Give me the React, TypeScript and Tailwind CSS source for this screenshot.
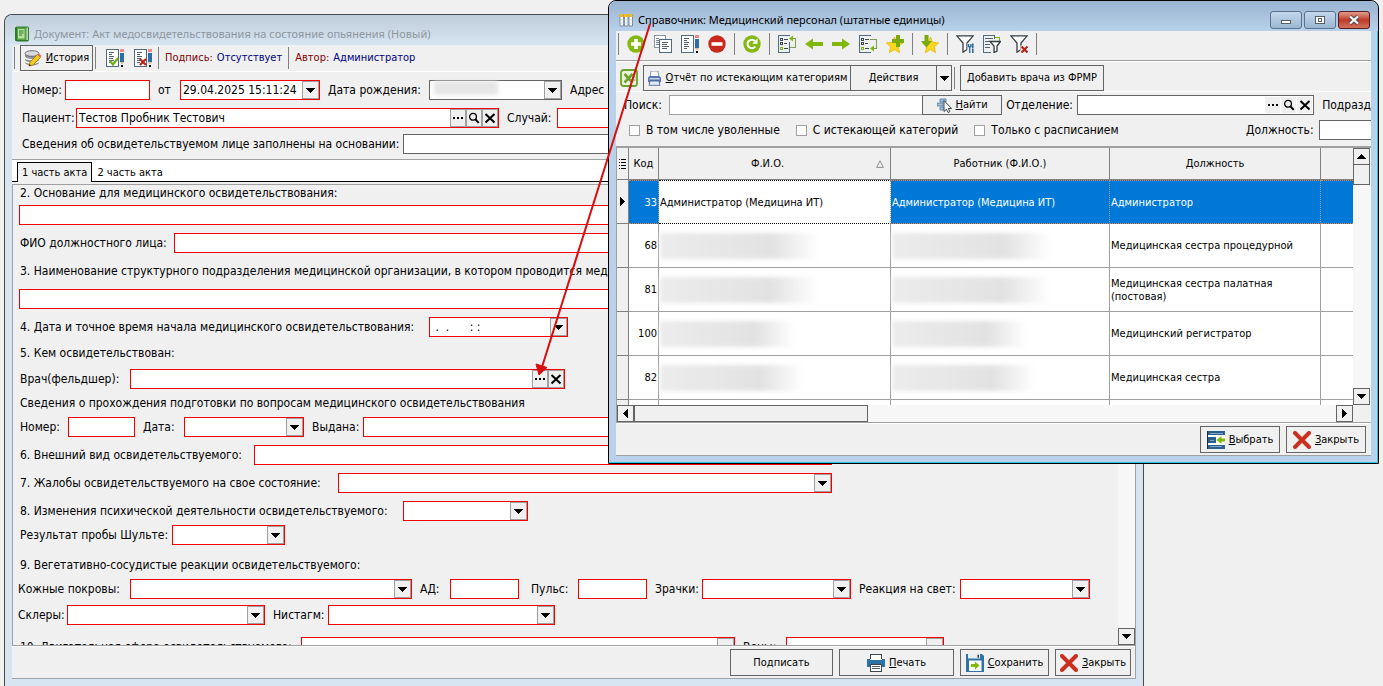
import React, { useId, useState } from 'react';
import clsx from 'clsx';

type Tone = 'red' | 'gray' | 'light';

const toneClass: Record<Tone, string> = {
  red: 'border-[#f50000]',
  gray: 'border-[#646464]',
  light: 'border-[#a0a0a0]',
};

interface FieldProps {
  label?: string;
  name?: string;
  labelClass?: string;
  className?: string;
  tone?: Tone;
  value?: string;
}

/* ---------- small glyphs ---------- */

function Triangle({ dir = 'down' }: { dir?: 'down' | 'up' | 'left' | 'right' }) {
  const d = {
    down: 'M0 2h9L4.5 7z',
    up: 'M0 7h9L4.5 2z',
    left: 'M7 0v9L2 4.5z',
    right: 'M2 0v9l5-4.5z',
  }[dir];
  return (
    <svg viewBox="0 0 9 9" className="size-[9px]" shapeRendering="crispEdges">
      <path d={d} fill="#000" />
    </svg>
  );
}

function DotsGlyph() {
  return (
    <svg viewBox="0 0 12 12" className="size-3" shapeRendering="crispEdges">
      <path d="M1 5h2v2H1zM5 5h2v2H5zM9 5h2v2H9z" fill="#000" />
    </svg>
  );
}

function LensGlyph() {
  return (
    <svg viewBox="0 0 12 12" className="size-3" fill="none" stroke="#000">
      <circle cx="5" cy="4.8" r="3.4" strokeWidth="1.3" />
      <path d="M7.3 7.3l3.4 3.6" strokeWidth="2" />
    </svg>
  );
}

function CrossGlyph() {
  return (
    <svg viewBox="0 0 12 12" className="size-3" stroke="#000" strokeWidth="2">
      <path d="M1.5 2l9 8.500M10.500 2l-9 8.500" />
    </svg>
  );
}

/* ---------- toolbar icons ---------- */

function Icon({ children }: { children: React.ReactNode }) {
  return (
    <svg viewBox="0 0 18 18" className="size-[18px] shrink-0" fill="none">
      {children}
    </svg>
  );
}

const BookIcon = () => (
  <svg viewBox="0 0 16 16" className="size-4 shrink-0">
    <path d="M1 1.500L3 .5h11l1 1V14l-1 1.500H3L1 14.500z" fill="#2f7a2c" />
    <path d="M3 1.500h9V14H3z" fill="#58a545" />
    <path d="M4 3h6.500v9.500H4z" fill="#b5e09c" />
    <path d="M5 5h4.500M5 7h4.500M5 9h3" stroke="#2f7a2c" />
    <path d="M12.500 1.500h1.300V14h-1.300z" fill="#e6efe2" />
  </svg>
);

const GridIcon = () => (
  <svg viewBox="0 0 14 14" className="size-3.5 shrink-0">
    <path d="M1 2h3.500v11H1zM5.500 2H9v11H5.500zM10 2h3.500v11H10z" fill="#fff" stroke="#6d8196" strokeWidth=".9" />
    <path d="M.5 1h4v3h-4zM5 1h4v3H5zM9.500 1h4v3h-4z" fill="#f0bb2b" />
    <path d="M1 7h12.500M1 10h12.500" stroke="#b7c5d3" strokeWidth=".7" />
  </svg>
);

const HistoryIcon = () => (
  <Icon>
    <path d="M1 4.500v9c0 1.600 3.200 3 7 3s7-1.400 7-3v-9z" fill="#8f9296" />
    <path d="M1 8c0 1.400 3.200 2.600 7 2.600S15 9.400 15 8M1 11.500c0 1.400 3.200 2.600 7 2.600s7-1.200 7-2.600" stroke="#fff" strokeWidth="1.200" />
    <ellipse cx="8" cy="4.500" rx="7" ry="2.800" fill="#d9dbdd" stroke="#6f7276" />
    <path d="M5 17l1-4 7.500-7.500 3 3L9 16z" fill="#f4c921" stroke="#a67408" strokeWidth=".8" />
    <path d="M13.500 5.500l3 3 1-1.500-2.500-2.500z" fill="#e86a5c" />
    <path d="M5 17l.6-2 1.400 1.400z" fill="#111" />
  </Icon>
);

const Sheet = ({ w = 11 }: { w?: number }) => (
  <g shapeRendering="crispEdges">
    <path d={`M.5 .5h${w}v17H.5z`} fill="#fff" stroke="#4f6b84" />
    <path d="M3 3.500h5M3 5.500h3M3 7.500h5M3 9.500h4M3 11.500h5M3 13.500h3" stroke="#54606b" />
  </g>
);

const Pen = () => (
  <g shapeRendering="crispEdges">
    <path d="M14 0h4v3h-4z" fill="#ee8a86" />
    <path d="M14 4h4v9h-4z" fill="#2d6fa5" />
    <path d="M14 13h4l-1 2h-2z" fill="#dfc29a" />
    <path d="M15 16h2v2h-2z" fill="#000" />
  </g>
);

const SignIcon = () => (
  <Icon>
    <Sheet w={12} />
    <path d="M4 12l3 3.500L12 9" stroke="#6fae16" strokeWidth="2.200" />
    <Pen />
  </Icon>
);

const UnsignIcon = () => (
  <Icon>
    <Sheet w={12} />
    <path d="M6 10l6 6M12 10l-6 6" stroke="#b8231a" strokeWidth="2.200" />
    <Pen />
  </Icon>
);

const EditIcon = () => (
  <Icon>
    <Sheet w={12} />
    <Pen />
  </Icon>
);

const AddIcon = () => (
  <Icon>
    <circle cx="9" cy="9" r="8.700" fill="#84b813" />
    <path d="M9 4v10M4 9h10" stroke="#fff" strokeWidth="3.600" />
  </Icon>
);

const RemoveIcon = () => (
  <Icon>
    <circle cx="9" cy="9" r="8.700" fill="#c9281c" />
    <path d="M3.500 9h11" stroke="#fff" strokeWidth="3.600" />
  </Icon>
);

const RefreshIcon = () => (
  <Icon>
    <circle cx="9" cy="9" r="8.700" fill="#84b813" />
    <path d="M12.300 11.500A4.300 4.300 0 1 1 12 6" stroke="#fff" strokeWidth="2" />
    <path d="M14.500 3.500v5.200H9.300z" fill="#fff" />
  </Icon>
);

const CopyIcon = () => (
  <Icon>
    <g shapeRendering="crispEdges">
      <path d="M.5 .5h11v12H.5z" fill="#fff" stroke="#8796a5" />
      <path d="M2 3.500h3M2 5.500h3M2 7.500h3M2 9.500h3" stroke="#6f7d8a" />
      <path d="M5.500 4.500h12v13h-12z" fill="#fff" stroke="#4f6b84" />
      <path d="M8 7.500h6M8 9.500h5M8 11.500h7M8 13.500h5" stroke="#54606b" />
    </g>
  </Icon>
);

const ListIcon = ({ down }: { down?: boolean }) => (
  <Icon>
    <g shapeRendering="crispEdges">
      <path d="M11.500 1V.5H.5v17h11V17" stroke="#4f6b84" />
      <path d="M2.500 3.500h2v2h-2zM2.500 7.500h2v2h-2z" stroke="#3c4854" />
      <path d="M2.500 12.500h2v2h-2z" stroke="#7fae1c" />
      <path d="M6 4.500h4M6 8.500h3M6 13.500h4" stroke="#3c4854" />
      <path d={down ? 'M11 4.500h6.500v9H14' : 'M14 3.500h3.500v9H11'} stroke="#7d9a5a" />
    </g>
    <path d={down ? 'M11 13.500l4-3v6z' : 'M11 3.500l4-3v6z'} fill="#7fb40f" />
    {!down && <path d="M11.500 7v10" stroke="#4f6b84" />}
  </Icon>
);

const ArrowIcon = ({ right }: { right?: boolean }) => (
  <Icon>
    <path
      d={right ? 'M0 7h10V3.500L18 9l-8 5.500V11H0z' : 'M18 7H8V3.500L0 9l8 5.500V11h10z'}
      fill="#80b80c"
    />
  </Icon>
);

const STAR = 'M9 1l2.300 5.400 6 .5-4.500 3.900 1.400 6L9 13.600 3.800 16.800l1.400-6L.7 6.900l6-.5z';

const StarAddIcon = () => (
  <Icon>
    <path d={STAR} transform="translate(-.5 1)" fill="#fbd81e" stroke="#e8b60c" strokeWidth=".8" />
    <path d="M12 0v12M6 6h12" stroke="#78ab12" strokeWidth="4" />
  </Icon>
);

const StarDownIcon = () => (
  <Icon>
    <path d={STAR} transform="translate(.5 1)" fill="#fbd81e" stroke="#e8b60c" strokeWidth=".8" />
    <path d="M3.500 0h4v6H11l-5.500 6.500L0 6h3.500z" fill="#78ab12" />
  </Icon>
);

const FUNNEL = 'M.8 .8h16.400L11 8v6.500l-4 2.700V8z';

const FunnelToolIcon = () => (
  <Icon>
    <path d={FUNNEL} fill="#fff" stroke="#333c45" strokeWidth="1.300" />
    <path d="M11.500 8h6.500v10h-6.500z" fill="#f0f0f0" />
    <path d="M12.500 9v2.500h2.500V9M13.700 11v7" stroke="#2d6fa5" strokeWidth="1.400" />
    <path d="M16.800 8.500v5M16.800 14v4" stroke="#2d6fa5" strokeWidth="1.600" />
  </Icon>
);

const FunnelListIcon = () => (
  <Icon>
    <g shapeRendering="crispEdges">
      <path d="M8 17.500H.5V.5h11V4" stroke="#4f6b84" />
      <path d="M2 3.500h8M2 6.500h5M2 9.500h5M2 12.500h5" stroke="#54606b" />
      <path d="M12 2.500h4.500V6" stroke="#7fb40f" />
    </g>
    <path d="M7 6.500h10.500L14 11v5l-3 1.500V11z" fill="#fff" stroke="#333c45" strokeWidth="1.300" />
  </Icon>
);

const FunnelClearIcon = () => (
  <Icon>
    <path d={FUNNEL} fill="#fff" stroke="#333c45" strokeWidth="1.300" />
    <path d="M10.500 10.500h8v8h-8z" fill="#f0f0f0" />
    <path d="M11.500 11.500l6 6M17.500 11.500l-6 6" stroke="#b8231a" strokeWidth="2.200" />
  </Icon>
);

const ExcelIcon = () => (
  <Icon>
    <rect x="1" y="1" width="16" height="16" rx="2.500" fill="#e9f3dc" stroke="#6ca32a" strokeWidth="1.800" />
    <path d="M4.500 5l8 8.500M12.500 5l-8 8.500" stroke="#6ca32a" strokeWidth="2.600" />
    <path d="M13 5h2.500M13 8h2.500M13 11h2.500" stroke="#6ca32a" />
  </Icon>
);

const PhotoPrinterIcon = () => (
  <svg viewBox="0 0 15 15" className="size-[15px] shrink-0">
    <path d="M4 0h7l1 6H3z" fill="#fff" stroke="#6b7fa0" strokeWidth=".8" />
    <path d="M1 6.500L3 5h9l2 1.500V11l-2 1H3l-2-1z" fill="#5877ae" />
    <path d="M2.500 7h10v1.500h-10z" fill="#c6d4ec" />
    <path d="M3 10h9l1 4.300H2z" fill="#e3ebf8" stroke="#3d588c" strokeWidth=".8" />
  </svg>
);

const PrinterIcon = () => (
  <Icon>
    <g shapeRendering="crispEdges">
      <path d="M3.500 .5h11v6h-11z" fill="#fff" stroke="#3b4650" />
      <path d="M0 5h18v8H0z" fill="#2e72a8" />
      <path d="M3 5h12v1H3z" fill="#fff" />
      <path d="M3.500 10.500h11v7h-11z" fill="#fff" stroke="#3b4650" />
      <path d="M5 12.500h8M5 14.500h8" stroke="#54606b" />
    </g>
  </Icon>
);

const FindIcon = () => (
  <svg viewBox="0 0 15 15" className="size-[15px] shrink-0">
    <path d="M3 1h6v3H3zM0 5h6v3H0zM3 9h6v3H3z" fill="#9fbfd9" stroke="#4f7ea6" strokeWidth=".8" />
    <path d="M7 2.500v11l2.500-2.300L11 14.500l1.800-.8-1.500-3.200H14.500z" fill="#fff" stroke="#333" strokeWidth=".9" />
  </svg>
);

const SelectIcon = () => (
  <Icon>
    <g shapeRendering="crispEdges">
      <path d="M0 0h18v18H0z" fill="#fff" />
      <path d="M1 0h17v4H1zM1 14h17v4H1zM1 6h8v6H1z" fill="#2b5f8c" />
      <path d="M0 0h1v18H0z" fill="#1c2c3a" />
      <path d="M3 2.500h13M3 15.500h12M3 9.500h4" stroke="#7fa5c4" />
    </g>
    <path d="M9.500 9l5-4v2.500h3.500v3h-3.500V13z" fill="#80b80c" />
  </Icon>
);

const SaveIcon = () => (
  <Icon>
    <path d="M0 0h16l2 2v16H0z" fill="#2e72a8" />
    <path d="M2 0h12v4.500H2z" fill="#e9eef2" />
    <path d="M11.500 0.800h1.500v3h-1.500z" fill="#333" />
    <path d="M3 6.500h12.500V17H3z" fill="#fff" />
    <path d="M5 10h4V7.500l4.500 4L9 15.500V13H5z" fill="#80b80c" />
  </Icon>
);

const CloseIcon = () => (
  <Icon>
    <path d="M2 2l14 14M16 2L2 16" stroke="#c9301f" strokeWidth="4" strokeLinecap="round" />
  </Icon>
);

/* ---------- form controls ---------- */

function Label({ id, text, className }: { id: string; text: string; className?: string }) {
  return (
    <label htmlFor={id} className={clsx('shrink-0 whitespace-nowrap', className)}>
      {text}
    </label>
  );
}

function TextField({ label, name, labelClass, className, tone = 'red', value = '' }: FieldProps) {
  const id = useId();
  return (
    <>
      {label && <Label id={id} text={label} className={labelClass} />}
      <input
        id={id}
        aria-label={label ? undefined : name}
        defaultValue={value}
        className={clsx('h-5 shrink-0 border bg-white px-0.5 outline-none', toneClass[tone], className)}
      />
    </>
  );
}

function ComboField({ label, labelClass, className, tone = 'red', value = '', blurred }: FieldProps & { blurred?: boolean }) {
  const id = useId();
  return (
    <>
      {label && <Label id={id} text={label} className={labelClass} />}
      <div className={clsx('relative flex h-5 shrink-0 border bg-white', toneClass[tone], className)}>
        <select id={id} className="min-w-0 flex-1 appearance-none pl-0.5 outline-none">
          <option>{value}</option>
        </select>
        <span className="pointer-events-none flex w-[17px] shrink-0 items-center justify-center border border-[#a0a0a0] bg-[#f0f0f0]">
          <Triangle />
        </span>
        {blurred && <span className="absolute top-0 left-1 h-3.5 w-16 bg-[#e6e6e6] blur-[2px]" />}
      </div>
    </>
  );
}

function LookupField({ label, labelClass, className, tone = 'red', value = '', search = true, flat }: FieldProps & { search?: boolean; flat?: boolean }) {
  const id = useId();
  const button = clsx('flex items-center justify-center bg-[#f0f0f0]', flat ? 'w-[15px]' : 'w-4 border border-[#a0a0a0]');
  return (
    <>
      {label && <Label id={id} text={label} className={labelClass} />}
      <div className={clsx('flex h-5 shrink-0 border bg-white', toneClass[tone], flat && 'gap-px p-px', className)}>
        <input id={id} defaultValue={value} className="min-w-0 flex-1 px-0.5 outline-none" />
        <button type="button" aria-label="Выбрать" className={button}><DotsGlyph /></button>
        {search && <button type="button" aria-label="Найти" className={button}><LensGlyph /></button>}
        <button type="button" aria-label="Очистить" className={button}><CrossGlyph /></button>
      </div>
    </>
  );
}

function Row({ className, children }: { className?: string; children: React.ReactNode }) {
  return <div className={clsx('flex h-5 items-center', className)}>{children}</div>;
}

/* Button caption with its access key underlined */
function Caption({ text }: { text: string }) {
  return (
    <span className="whitespace-nowrap">
      <u>{text[0]}</u>
      {text.slice(1)}
    </span>
  );
}

function PushButton({ className, children }: { className?: string; children: React.ReactNode }) {
  return (
    <button
      type="button"
      className={clsx('flex shrink-0 items-center justify-center gap-1 border border-[#646464] bg-[#f0f0f0] text-[11px] whitespace-nowrap', className)}
    >
      {children}
    </button>
  );
}

function ToolButton({ title, children }: { title: string; children: React.ReactNode }) {
  return (
    <button type="button" aria-label={title} className="flex shrink-0">
      {children}
    </button>
  );
}

const Separator = ({ className }: { className?: string }) => (
  <span className={clsx('w-px shrink-0 bg-[#808080]', className ?? 'h-[22px]')} />
);

function ScrollButton({ dir, label }: { dir: 'down' | 'up' | 'left' | 'right'; label: string }) {
  return (
    <button
      type="button"
      aria-label={label}
      className="flex size-[17px] shrink-0 items-center justify-center border border-[#646464] bg-[#f0f0f0]"
    >
      <Triangle dir={dir} />
    </button>
  );
}

/* ---------- document window ---------- */

function DocumentWindow() {
  const [tab, setTab] = useState(0);
  const tabs = ['1 часть акта', '2 часть акта'];

  return (
    <section className="mr-[239px] ml-1 flex min-h-0 flex-1 flex-col rounded-t-lg border border-b-0 border-[#4a4a4a] bg-[#d7e4f2] px-[7px] pb-[7px]">
      <header className="-mx-[7px] flex h-[30px] shrink-0 items-center gap-1 rounded-t-lg bg-linear-to-b from-[#bfcddb] to-[#d7e4f2] pt-2 pl-[9px]">
        <BookIcon />
        <h1 className="font-['Noto_Sans',sans-serif] text-[11px] text-[#8f979f]">
          Документ: Акт медосвидетельствования на состояние опьянения (Новый)
        </h1>
      </header>

      <div className="flex min-h-0 flex-1 flex-col border-r border-b border-[#a0a0a0] bg-[#f0f0f0]">
        <div className="flex h-[27px] shrink-0 items-center border-b border-white pl-0.5 text-[11px]">
          <Separator />
          <PushButton className="mx-[5px] h-[26px] w-[73px] bg-[#e8e8e8]">
            <HistoryIcon />
            <Caption text="История" />
          </PushButton>
          <div className="flex items-center gap-2.5">
            <Separator className="-ml-[3px] h-[22px]" />
            <ToolButton title="Подписать документ"><SignIcon /></ToolButton>
            <ToolButton title="Снять подпись"><UnsignIcon /></ToolButton>
          </div>
          <Separator className="mx-1.5 h-[22px]" />
          <span className="text-[#800000]">Подпись:</span>
          <span className="ml-1 text-[#000080]">Отсутствует</span>
          <Separator className="mx-1.5 h-[22px]" />
          <span className="text-[#800000]">Автор:</span>
          <span className="ml-1 text-[#000080]">Администратор</span>
        </div>

        <div className="shrink-0 overflow-hidden border-b border-[#a0a0a0] pt-2 pb-[5px] pl-2.5">
          <Row>
            <TextField label="Номер:" labelClass="w-[43px]" className="w-[85px]" />
            <ComboField label="от" labelClass="ml-2 w-[22px]" className="w-[140px]" value="29.04.2025 15:11:24" />
            <ComboField label="Дата рождения:" labelClass="ml-2 w-[101px]" className="w-[133px]" tone="gray" blurred />
            <span className="ml-2">Адрес</span>
          </Row>
          <Row className="mt-2">
            <LookupField label="Пациент:" labelClass="w-[54px]" className="w-[423px]" value="Тестов Пробник Тестович" />
            <TextField label="Случай:" labelClass="ml-2 w-[50px]" className="w-[200px]" />
          </Row>
          <Row className="mt-1.5">
            <TextField label="Сведения об освидетельствуемом лице заполнены на основании:" labelClass="w-[381px]" className="w-[300px]" tone="gray" />
          </Row>
        </div>

        <div className="flex h-[22px] shrink-0 items-end border-b border-black bg-white pl-[5px] text-[11px]" role="tablist">
          {tabs.map((title, i) => (
            <button
              key={title}
              type="button"
              role="tab"
              aria-selected={tab === i}
              onClick={() => setTab(i)}
              className={clsx(
                '-mb-px h-5 border border-b-0 px-1',
                tab === i ? 'border-black bg-[#f0f0f0]' : 'border-transparent',
              )}
            >
              {title}
            </button>
          ))}
        </div>

        <div className="mt-0.5 flex min-h-0 flex-1 border-t border-b border-l border-[#a0a0a0]">
          <div className="min-w-0 flex-1 overflow-hidden pl-[7px]">
            <p className="h-[18px] leading-4">2. Основание для медицинского освидетельствования:</p>
            <Row className="mt-0.5">
              <TextField name="Основание" className="-ml-px w-[700px]" />
            </Row>
            <Row className="mt-2">
              <TextField label="ФИО должностного лица:" labelClass="w-[154px]" className="w-[600px]" />
            </Row>
            <Row className="mt-2">
              <span className="whitespace-nowrap">3. Наименование структурного подразделения медицинской организации, в котором проводится мед</span>
            </Row>
            <Row className="mt-2">
              <TextField name="Структурное подразделение" className="-ml-px w-[700px]" />
            </Row>
            <Row className="mt-2">
              <ComboField
                label="4. Дата и точное время начала медицинского освидетельствования:"
                labelClass="w-[409px]"
                className="w-[139px]"
                value={'\u00a0.\u00a0\u00a0.\u00a0\u00a0\u00a0\u00a0\u00a0\u00a0:\u00a0:'}
              />
            </Row>
            <Row className="mt-1.5">
              <span>5. Кем освидетельствован:</span>
            </Row>
            <Row className="mt-1.5">
              <LookupField label="Врач(фельдшер):" labelClass="w-[110px]" className="w-[435px]" search={false} />
            </Row>
            <Row className="mt-1">
              <span>Сведения о прохождения подготовки по вопросам медицинского освидетельствования</span>
            </Row>
            <Row className="mt-1">
              <TextField label="Номер:" labelClass="w-12" className="w-[67px]" />
              <ComboField label="Дата:" labelClass="ml-2 w-[41px]" className="w-[120px]" />
              <TextField label="Выдана:" labelClass="ml-2 w-[51px]" className="w-[300px]" />
            </Row>
            <Row className="mt-2">
              <TextField label="6. Внешний вид освидетельствуемого:" labelClass="w-[234px]" className="w-[578px]" />
            </Row>
            <Row className="mt-2">
              <ComboField label="7. Жалобы освидетельствуемого на свое состояние:" labelClass="w-[318px]" className="w-[494px]" />
            </Row>
            <Row className="mt-2">
              <ComboField label="8. Изменения психической деятельности освидетельствуемого:" labelClass="w-[383px]" className="w-[125px]" />
            </Row>
            <Row className="mt-1">
              <ComboField label="Результат пробы Шульте:" labelClass="w-[152px]" className="w-[113px]" />
            </Row>
            <Row className="mt-2.5">
              <span>9. Вегетативно-сосудистые реакции освидетельствуемого:</span>
            </Row>
            <Row className="mt-1">
              <div className="-ml-0.5 flex items-center">
                <ComboField label="Кожные покровы:" labelClass="w-28" className="w-[282px]" />
                <TextField label="АД:" labelClass="ml-2 w-[30px]" className="w-[69px]" />
                <TextField label="Пульс:" labelClass="ml-3 w-[47px]" className="w-[69px]" />
                <ComboField label="Зрачки:" labelClass="ml-2 w-[47px]" className="w-[149px]" />
                <ComboField label="Реакция на свет:" labelClass="ml-2 w-[101px]" className="w-[130px]" />
              </div>
            </Row>
            <Row className="mt-1.5">
              <div className="-ml-0.5 flex items-center">
                <ComboField label="Склеры:" labelClass="w-[49px]" className="w-[198px]" />
                <ComboField label="Нистагм:" labelClass="ml-2 w-[55px]" className="w-[227px]" />
              </div>
            </Row>
            <Row className="mt-3">
              <ComboField label="10. Двигательная сфера освидетельствуемого:" labelClass="w-[281px]" className="w-[434px]" />
              <ComboField label="Вены:" labelClass="ml-2 w-[43px]" className="w-[158px]" />
            </Row>
          </div>
          <div className="flex w-[17px] shrink-0 flex-col justify-end bg-[#f7f7f7]">
            <ScrollButton dir="down" label="Прокрутить вниз" />
          </div>
        </div>

        <footer className="flex h-8 shrink-0 items-center justify-end gap-1.5 border-t border-white pr-1">
          <PushButton className="h-[27px] w-[103px]">Подписать</PushButton>
          <PushButton className="h-[27px] w-[115px]"><PrinterIcon /><Caption text="Печать" /></PushButton>
          <PushButton className="h-[27px] w-[89px]"><SaveIcon /><Caption text="Сохранить" /></PushButton>
          <PushButton className="h-[27px] w-[76px]"><CloseIcon /><Caption text="Закрыть" /></PushButton>
        </footer>
      </div>
    </section>
  );
}

/* ---------- staff directory ---------- */

const staff = [
  { code: 33, name: 'Администратор (Медицина ИТ)', post: 'Администратор' },
  { code: 68, blur: 'w-[160px]', post: 'Медицинская сестра процедурной' },
  { code: 81, blur: 'w-[158px]', post: 'Медицинская сестра палатная (постовая)' },
  { code: 100, blur: 'w-[136px]', post: 'Медицинский регистратор' },
  { code: 82, blur: 'w-[144px]', post: 'Медицинская сестра' },
];

function Smudge({ width }: { width?: string }) {
  return (
    <span
      className={clsx('block h-[26px] max-w-full bg-linear-to-r from-[#ececec] via-[#e2e2e2] via-70% to-white blur-[2px]', width)}
    />
  );
}

function StaffTable() {
  const head = 'border-r border-b border-[#808080] font-normal';
  const cell = 'border-r border-b border-[#a0a0a0] px-px';
  const active = 'border-y border-y-[#f08030] border-dotted border-r-[#a0a0a0] bg-[#0078d7] text-white';

  return (
    <table className="w-full table-fixed border-separate border-spacing-0 bg-white text-[11px] leading-[13px]">
      <colgroup>
        <col className="w-3" />
        <col className="w-[30px]" />
        <col className="w-[232px]" />
        <col className="w-[219px]" />
        <col className="w-[211px]" />
        <col />
      </colgroup>
      <thead>
        <tr className="h-8 bg-[#f0f0f0]">
          <th className={head} aria-label="Строка">
            <svg viewBox="0 0 8 10" className="mx-auto h-2.5 w-2" stroke="#000" shapeRendering="crispEdges">
              <path d="M0 .5h1M2 .5h5M0 3.500h1M2 3.500h5M0 6.500h1M2 6.500h5M0 9.500h1M2 9.500h5" />
            </svg>
          </th>
          <th className={head}>Код</th>
          <th className={head}>
            <span className="flex items-center pr-1.5">
              <span className="flex-1">Ф.И.О.</span>
              <svg viewBox="0 0 8 8" className="size-2" fill="none" stroke="#909090">
                <path d="M4 .8L7.400 7.400H.6z" />
              </svg>
            </span>
          </th>
          <th className={head}>Работник (Ф.И.О.)</th>
          <th className={head}>Должность</th>
          <th className="border-b border-[#808080]" aria-label="Прочее" />
        </tr>
      </thead>
      <tbody>
        {staff.map((row) => {
          const selected = row.code === 33;
          return (
            <tr key={row.code} className="h-11">
              <td className="border-r border-b border-[#808080] bg-[#f0f0f0]">
                {selected && <span className="flex justify-center"><Triangle dir="right" /></span>}
              </td>
              <td className={clsx(cell, 'text-right', selected && active)}>{row.code}</td>
              <td className={clsx(cell, selected && 'border-y border-y-black border-dotted')}>
                {row.name ?? <Smudge width={row.blur} />}
              </td>
              <td className={clsx(cell, selected && active)}>
                {row.name ?? <Smudge width={row.blur} />}
              </td>
              <td className={clsx(cell, selected && active)}>{row.post}</td>
              <td className={clsx('border-b border-[#a0a0a0]', selected && active, selected && 'border-r-0')} />
            </tr>
          );
        })}
        <tr className="h-[5px]">
          <td className="border-r border-[#808080] bg-[#f0f0f0]" />
          <td className="border-r border-[#a0a0a0]" />
          <td className="border-r border-[#a0a0a0]" />
          <td className="border-r border-[#a0a0a0]" />
          <td className="border-r border-[#a0a0a0]" />
          <td />
        </tr>
      </tbody>
    </table>
  );
}

function FilterCheck({ text }: { text: string }) {
  return (
    <label className="flex items-center gap-1.5 whitespace-nowrap">
      <input type="checkbox" className="size-[11px] appearance-none border border-[#a0a0a0] bg-white checked:bg-[#0078d7]" />
      {text}
    </label>
  );
}

function DirectoryDialog() {
  const caption = 'flex h-[18px] w-8 items-center justify-center rounded-[3px] border bg-linear-to-b';
  const searchId = useId();

  return (
    <section
      role="dialog"
      aria-labelledby="directory-title"
      className="absolute top-0 right-1 left-[608px] flex flex-col rounded-t-lg border border-black bg-[#b9d1ea] px-[7px] pb-[7px] shadow-[inset_-1px_-1px_0_#27c4dc]"
    >
      <header className="-mx-[7px] flex h-[30px] items-center rounded-t-lg bg-linear-to-b from-[#99b4d1] to-[#b9d1ea] pt-2 pr-2 pl-2.5">
        <GridIcon />
        <h2 id="directory-title" className="ml-[5px] flex-1 font-['Noto_Sans',sans-serif] text-[11px]">
          Справочник: Медицинский персонал (штатные единицы)
        </h2>
        <div className="flex gap-0.5">
          <button type="button" aria-label="Свернуть" className={clsx(caption, 'border-[#5d728a] from-[#c3d7ec] to-[#9ab7d3]')}>
            <span className="mt-1 h-1 w-2.5 border border-[#555c66] bg-white" />
          </button>
          <button type="button" aria-label="Развернуть" className={clsx(caption, 'border-[#5d728a] from-[#c3d7ec] to-[#9ab7d3]')}>
            <span className="flex h-2 w-2.5 items-center justify-center border border-[#555c66] bg-white">
              <span className="h-1 w-1 border border-[#555c66]" />
            </span>
          </button>
          <button type="button" aria-label="Закрыть окно" className={clsx(caption, 'border-[#571b1e] from-[#e39a8c] via-[#bb3a27] to-[#d2715d]')}>
            <svg viewBox="0 0 12 10" className="h-2.5 w-3">
              <path d="M2 1.500l8 7M10 1.500l-8 7" stroke="#4a4a55" strokeWidth="4" />
              <path d="M2 1.500l8 7M10 1.500l-8 7" stroke="#fff" strokeWidth="2.200" />
            </svg>
          </button>
        </div>
      </header>

      <div className="overflow-hidden border-b border-[#a0a0a0] bg-[#f0f0f0]">
        <div className="flex h-[30px] items-center gap-2 border-b border-[#a0a0a0] pb-1 pl-0.5">
          <Separator />
          <div className="flex gap-[9px]">
            <ToolButton title="Добавить"><AddIcon /></ToolButton>
            <ToolButton title="Копировать"><CopyIcon /></ToolButton>
            <ToolButton title="Изменить"><EditIcon /></ToolButton>
            <ToolButton title="Удалить"><RemoveIcon /></ToolButton>
          </div>
          <Separator />
          <ToolButton title="Обновить"><RefreshIcon /></ToolButton>
          <Separator />
          <div className="flex gap-[9px]">
            <ToolButton title="В начало списка"><ListIcon /></ToolButton>
            <ToolButton title="Назад"><ArrowIcon /></ToolButton>
            <ToolButton title="Вперёд"><ArrowIcon right /></ToolButton>
            <ToolButton title="В конец списка"><ListIcon down /></ToolButton>
            <ToolButton title="В избранное"><StarAddIcon /></ToolButton>
          </div>
          <Separator />
          <ToolButton title="Из избранного"><StarDownIcon /></ToolButton>
          <Separator />
          <div className="flex gap-[9px]">
            <ToolButton title="Настроить фильтр"><FunnelToolIcon /></ToolButton>
            <ToolButton title="Список фильтров"><FunnelListIcon /></ToolButton>
            <ToolButton title="Снять фильтр"><FunnelClearIcon /></ToolButton>
          </div>
          <Separator />
        </div>

        <div className="flex items-center border-t border-b border-white pt-[3px] pl-1">
          <ToolButton title="Экспорт в Excel"><ExcelIcon /></ToolButton>
          <PushButton className="ml-[5px] h-[26px] w-[208px]">
            <PhotoPrinterIcon />
            <Caption text="Отчёт по истекающим категориям" />
          </PushButton>
          <PushButton className="-ml-px h-[26px] w-[87px]">Действия</PushButton>
          <PushButton className="-ml-px h-[26px] w-4"><Triangle /></PushButton>
          <Separator className="mr-[5px] ml-0.5 h-[22px]" />
          <PushButton className="h-[26px] w-36">Добавить врача из ФРМР</PushButton>
        </div>

        <div className="pt-[3px]">
          <Row className="pl-2">
            <Label id={searchId} text="Поиск:" className="w-[45px]" />
            <input id={searchId} className="h-5 w-64 border border-[#a0a0a0] bg-white px-1 outline-none" />
            <PushButton className="-ml-px h-5 w-20"><FindIcon /><Caption text="Найти" /></PushButton>
            <LookupField label="Отделение:" labelClass="ml-1 w-[71px]" className="w-[237px]" tone="gray" flat />
            <span className="ml-2 whitespace-nowrap">Подразд</span>
          </Row>
          <Row className="mt-[5px] mb-1.5 pl-[13px]">
            <div className="flex flex-1 gap-4">
              <FilterCheck text="В том числе уволенные" />
              <FilterCheck text="С истекающей категорий" />
              <FilterCheck text="Только с расписанием" />
            </div>
            <TextField label="Должность:" labelClass="w-[73px]" className="-mr-1 w-14" tone="gray" />
          </Row>
        </div>

        <div className="border-t-2 border-b border-l border-[#a0a0a0]">
          <div className="flex">
            <div className="min-w-0 flex-1 overflow-hidden">
              <StaffTable />
            </div>
            <div className="flex w-[18px] shrink-0 flex-col bg-[#f7f7f7] pr-px">
              <ScrollButton dir="up" label="Прокрутить вверх" />
              <span className="h-5 border border-t-0 border-[#646464] bg-[#f0f0f0]" />
              <span className="flex-1" />
              <ScrollButton dir="down" label="Прокрутить вниз" />
            </div>
          </div>
          <div className="flex pr-[18px]">
            <ScrollButton dir="left" label="Прокрутить влево" />
            <span className="w-[234px] border border-[#646464] bg-[#f0f0f0]" />
            <span className="flex-1 bg-[#f7f7f7]" />
            <ScrollButton dir="right" label="Прокрутить вправо" />
          </div>
        </div>

        <footer className="flex h-8 items-center justify-end gap-1.5 border-t border-white pr-[5px]">
          <PushButton className="h-[27px] w-20"><SelectIcon /><Caption text="Выбрать" /></PushButton>
          <PushButton className="h-[27px] w-20"><CloseIcon /><Caption text="Закрыть" /></PushButton>
        </footer>
      </div>
    </section>
  );
}

export default function App() {
  return (
    <main className="relative flex h-screen flex-col overflow-hidden bg-[#f0f0f0] pt-3.5 font-['DejaVu_Sans_Condensed','DejaVu_Sans',sans-serif] text-[12px] leading-4 text-black">
      <DocumentWindow />
      <DirectoryDialog />
      {/* pointer from the directory title to the lookup button */}
      <svg className="pointer-events-none absolute top-0 left-0 h-[400px] w-[700px]" viewBox="0 0 700 400">
        <path d="M650 24L542 367" stroke="#d80d0d" strokeWidth="2" fill="none" />
        <path d="M539 375l-3-11 11 3.500z" fill="#d80d0d" stroke="#d80d0d" />
      </svg>
    </main>
  );
}
